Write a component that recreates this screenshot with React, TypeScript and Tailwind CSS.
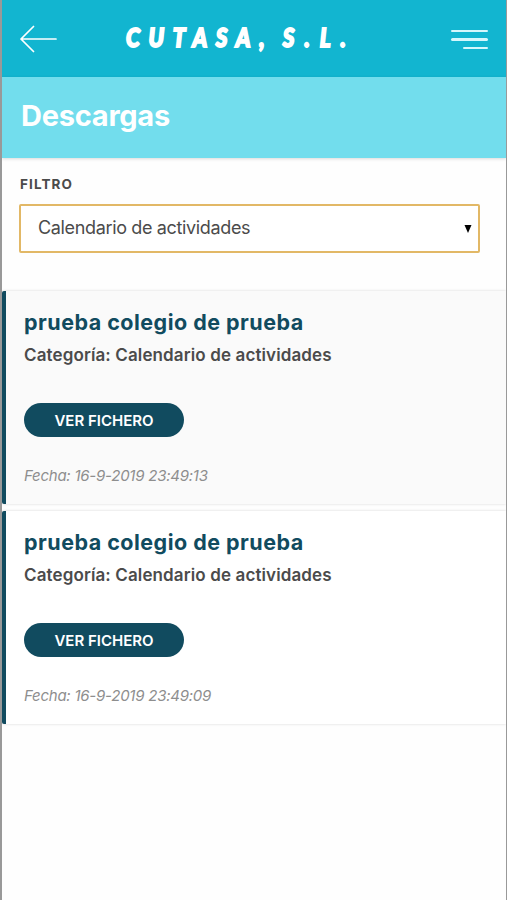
interface Download {
  title: string;
  category: string;
  date: string;
}

const downloads: Download[] = [
  { title: 'prueba colegio de prueba', category: 'Calendario de actividades', date: '16-9-2019 23:49:13' },
  { title: 'prueba colegio de prueba', category: 'Calendario de actividades', date: '16-9-2019 23:49:09' }
];

function Header() {
  return (
    <header className="flex h-[77px] items-center bg-[#12b5d0] px-[18px]">
      <button aria-label="Volver">
        <svg className="h-[28px] w-[38px]" viewBox="0 0 38 28" fill="none" stroke="white" strokeWidth="1.7" strokeLinecap="round" strokeLinejoin="round">
          <path d="M36 14H1M13.5 1.5L1 14L13.5 26.5" />
        </svg>
      </button>
      <h1 className="mb-[4px] ml-[68px] w-[240px] whitespace-nowrap font-['Lato'] text-[26px] leading-[40px] font-black italic text-white">
        <span className="inline-block origin-left scale-x-[0.86] tracking-[10.1px] [-webkit-text-stroke:1.9px_white] [word-spacing:-4.4px]">
          CUTASA, <span className="tracking-[11.6px]">S.L.</span>
        </span>
      </h1>
      <button aria-label="Menú" className="mt-[2px] ml-auto flex w-[37px] flex-col items-end gap-[6px]">
        <span className="h-[2.5px] w-full rounded-full bg-[#d5f7fc]"></span>
        <span className="h-[2.5px] w-full rounded-full bg-[#d5f7fc]"></span>
        <span className="h-[2.5px] w-[25px] rounded-full bg-[#d5f7fc]"></span>
      </button>
    </header>
  );
}

function DownloadCard({ title, category, date }: Download) {
  return (
    <article className="h-[213px] rounded-l-xs border-l-4 border-[#114b5f] pl-[18px] pt-[17px] shadow-[0_0_3px_rgba(0,0,0,0.16)] odd:bg-[#fafafa] even:bg-white">
      <h3 className="text-[21.5px] leading-[28px] font-bold tracking-[0.48px] whitespace-nowrap text-[#114b5f]">{title}</h3>
      <p className="mt-[6px] text-[17px] leading-[26px] font-semibold tracking-[0.12px] whitespace-nowrap text-[#4b4b4b]">Categoría: {category}</p>
      <button className="mt-[35px] flex h-[34px] w-[160px] items-center justify-center rounded-full bg-[#114b5f] pt-[2px] text-[15px] font-semibold text-white">
        VER FICHERO
      </button>
      <p className="mt-[28px] text-[15px] leading-[22px] tracking-[-0.24px] italic whitespace-nowrap text-[#8e8e8e]">Fecha: {date}</p>
    </article>
  );
}

export default function App() {
  return (
    <div className="h-[900px] w-[507px] overflow-hidden border-l-2 border-r border-[#999999] bg-[#fefefe] font-['Inter',sans-serif]">
      <Header />
      {/* Section title */}
      <div className="flex h-[81px] items-center bg-[#72dded] pb-[4px] pl-[19px] shadow-[0_1px_3px_rgba(0,0,0,0.15)]">
        <h2 className="text-[29px] leading-[40px] font-bold tracking-[-0.25px] text-white">Descargas</h2>
      </div>

      {/* Filter */}
      <div className="h-[133px] px-[17px] pt-[16px]">
        <label className="block pl-px text-[13.5px] leading-[20px] font-bold tracking-[1.1px] text-[#4b4b4b]">FILTRO</label>
        <button className="mt-[10px] flex h-[49px] w-[461px] items-center justify-between rounded-xs border-2 border-[#e2b866] bg-white pb-[3px] pl-[17px] pr-[6px] text-left text-[18px] tracking-[-0.35px] text-[#4b4b4b]">
          <span>Calendario de actividades</span>
          <svg className="mt-[3px] h-[8px] w-[8px]" viewBox="0 0 8 8">
            <path d="M0.5 0H7.5L4 8Z" fill="black" />
          </svg>
        </button>
      </div>

      <main className="flex flex-col gap-[7px]">
        {downloads.map((item) => (
          <DownloadCard key={item.date} {...item} />
        ))}
      </main>
    </div>
  );
}
